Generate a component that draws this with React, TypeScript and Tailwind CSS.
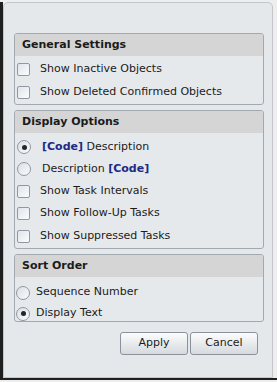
import type { ReactNode } from "react";

const font = { fontFamily: '"DejaVu Sans", Verdana, sans-serif' };

function Checkbox() {
  return (
    <span className="block h-[13px] w-[13px] shrink-0 rounded-[2px] border border-[#8f98a3] bg-gradient-to-br from-[#dfe5ec] to-[#fbfcfd]" />
  );
}

function Radio({ checked }: { checked?: boolean }) {
  return (
    <span className="flex h-[14px] w-[14px] shrink-0 items-center justify-center rounded-full border border-[#8f98a3] bg-gradient-to-br from-[#d9dfe6] to-[#fbfcfd]">
      {checked && <span className="block h-[5px] w-[5px] rounded-full bg-[#262626]" />}
    </span>
  );
}

function Group({ title, children, className }: { title: string; children: ReactNode; className?: string }) {
  return (
    <section className={"overflow-hidden rounded-[3px] border border-[#a3a9b0] bg-[#e6e9ec] " + (className ?? "")}>
      <h2 className="flex h-[22px] items-center bg-[#d5d5d5] pl-[7px] text-[11px] font-bold text-[#1b1b1b]">{title}</h2>
      {children}
    </section>
  );
}

function Code() {
  return <span className="font-bold text-[#1d2a86]">[Code]</span>;
}

export default function App() {
  return (
    <div className="h-[382px] w-[277px] bg-[#eeeeee] pb-[2px] pt-[2px]" style={font}>
      <div className="h-full w-full border-b-[2px] border-l-[3px] border-[#1f1f1f]">
        <div className="h-full w-[270px] rounded-t-[5px] border border-[#c2c6cb] bg-[#e5e8eb] pl-[10px] pt-[30px] text-[11px] text-[#1b1b1b]">
          <div className="flex w-[250px] flex-col gap-[5px]">
            <Group title="General Settings">
              <div className="pt-[2px]">
                <label className="flex h-[23px] items-center gap-[10px] pl-[2px]">
                  <Checkbox />
                  Show Inactive Objects
                </label>
                <label className="flex h-[23px] items-center gap-[10px] pl-[2px]">
                  <Checkbox />
                  Show Deleted Confirmed Objects
                </label>
              </div>
            </Group>

            <Group title="Display Options">
              <div className="pt-[3px]">
                <label className="flex h-[22px] items-center gap-[11px] pl-[2px]">
                  <Radio checked />
                  <span>
                    <Code /> Description
                  </span>
                </label>
                <label className="flex h-[22px] items-center gap-[11px] pl-[2px]">
                  <Radio />
                  <span>
                    Description <Code />
                  </span>
                </label>
                <label className="flex h-[22px] items-center gap-[10px] pl-[2px]">
                  <Checkbox />
                  Show Task Intervals
                </label>
                <label className="flex h-[23px] items-center gap-[10px] pl-[2px]">
                  <Checkbox />
                  Show Follow-Up Tasks
                </label>
                <label className="flex h-[23px] items-center gap-[10px] pl-[2px]">
                  <Checkbox />
                  Show Suppressed Tasks
                </label>
              </div>
            </Group>

            <Group title="Sort Order" className="h-[68px]">
              <div className="pt-[5px]">
                <label className="flex h-[21px] items-center gap-[6px] pl-[1px]">
                  <Radio />
                  Sequence Number
                </label>
                <label className="flex h-[21px] items-center gap-[6px] pl-[1px]">
                  <Radio checked />
                  Display Text
                </label>
              </div>
            </Group>

            <div className="mt-[5px] flex justify-end gap-[2px] pr-[6px]">
              <button className="h-[23px] w-[68px] rounded-[3px] border border-[#8c929a] bg-gradient-to-b from-[#fbfcfc] to-[#d6dadf] text-[11px] text-[#1b1b1b]">
                Apply
              </button>
              <button className="h-[23px] w-[68px] rounded-[3px] border border-[#8c929a] bg-gradient-to-b from-[#fbfcfc] to-[#d6dadf] text-[11px] text-[#1b1b1b]">
                Cancel
              </button>
            </div>
          </div>
        </div>
      </div>
    </div>
  );
}
